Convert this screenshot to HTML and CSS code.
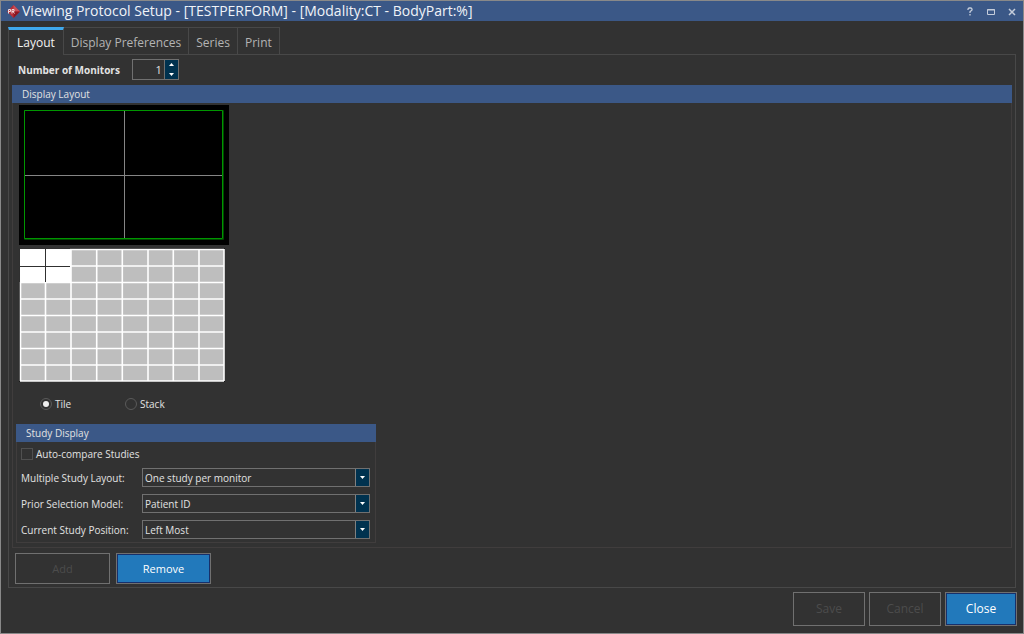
FILE: index.html
```html
<!DOCTYPE html>
<html lang="en">
<head>
<meta charset="utf-8">
<title>Viewing Protocol Setup</title>
<link rel="stylesheet" href="styles.css">
</head>
<body>
<main class="window">
  <header class="titlebar">
    <svg class="logo" width="13" height="13" viewBox="0 0 13 13" aria-hidden="true">
      <path d="M6.5 0 13 6.5 6.5 13 0 6.5Z" fill="#b5303a"/>
      <path d="M6.5 0 13 6.5H6.5Z" fill="#c9505a"/>
      <path d="M6.5 13 13 6.5H6.5Z" fill="#8c1620"/>
      <path d="M1.5 8.500V4.500H3.500V6.500H1.500M5 8.500V4.500H7V6.500H5M6 6.500 7.500 8.500" fill="none" stroke="#f0d8da"/>
    </svg>
    <h1 class="title">Viewing Protocol Setup - [TESTPERFORM] - [Modality:CT - BodyPart:%]</h1>
    <button class="win-btn" type="button" aria-label="Help">
      <svg width="9" height="10" viewBox="0 0 9 10"><path d="M3 4V3L4 2H6L7 3V4L5 5.700V7M5 8V9.500" fill="none" stroke="#c5cddb" stroke-width="1.300"/></svg>
    </button>
    <button class="win-btn" type="button" aria-label="Maximize">
      <svg width="9" height="10" viewBox="0 0 9 10"><path d="M1.500 3.500H8.500V8.500H1.500ZM1 4H9" fill="none" stroke="#c5cddb"/></svg>
    </button>
    <button class="win-btn" type="button" aria-label="Close window">
      <svg width="9" height="10" viewBox="0 0 9 10"><path d="M2 3 8 9M8 3 2 9" fill="none" stroke="#c5cddb" stroke-width="1.500"/></svg>
    </button>
  </header>

  <nav class="tabs" role="tablist">
    <button class="tab tab-active" type="button" role="tab" aria-selected="true">Layout</button>
    <button class="tab" type="button" role="tab">Display Preferences</button>
    <button class="tab" type="button" role="tab">Series</button>
    <button class="tab" type="button" role="tab">Print</button>
  </nav>

  <section class="panel">
    <div class="monitors">
      <label class="monitors-label" for="monitors">Number of Monitors</label>
      <div class="spinner">
        <input class="spinner-input" id="monitors" type="text" inputmode="numeric" value="1">
        <div class="spinner-btns">
          <button class="spin" type="button" aria-label="Increase"><svg width="5" height="3" viewBox="0 0 5 3"><path d="M0 3 2.500 0 5 3Z" fill="#fff"/></svg></button>
          <button class="spin" type="button" aria-label="Decrease"><svg width="5" height="3" viewBox="0 0 5 3"><path d="M0 0H5L2.500 3Z" fill="#fff"/></svg></button>
        </div>
      </div>
    </div>

    <section class="group group-layout">
      <h2 class="group-title">Display Layout</h2>
      <div class="layout-body">
        <svg class="preview" width="210" height="140" viewBox="0 0 210 140" role="img" aria-label="Two by two layout">
          <path d="M0 0H210V140H0Z" fill="#000"/>
          <path d="M105.500 6V134M6 70.500H204" stroke="#858585" fill="none"/>
          <path d="M5.500 5.500H204.500V134.500H5.500Z" stroke="#004800" fill="none"/>
          <path d="M5.500 5.500H203.500V133.500H5.500Z" stroke="#009600" fill="none"/>
        </svg>
        <svg class="picker" width="206" height="134" viewBox="0 0 206 134" role="img" aria-label="Grid size picker">
          <path d="M0 0H206V134H0Z" fill="#181818"/>
          <path d="M1 1H205V133H1Z" fill="#bebebe"/>
          <path d="M1.500 1V133M26.500 1V133M52 1V133M77.700 1V133M103.300 1V133M129 1V133M154.300 1V133M180 1V133M205 1V133M1 1.500H205M1 18H205M1 34.500H205M1 51H205M1 67.500H205M1 84H205M1 100.500H205M1 117H205M1 133H205" stroke="#fff" stroke-width="1.600" fill="none"/>
          <path d="M1 1H52V35H1Z" fill="#fff"/>
          <path d="M0 .5H51M.5 0V34M26.500 1V34M1 18.500H51" stroke="#303030" fill="none"/>
        </svg>
        <div class="modes">
          <label class="mode"><input class="radio" type="radio" name="mode" checked>Tile</label>
          <label class="mode"><input class="radio" type="radio" name="mode">Stack</label>
        </div>
      </div>

      <section class="group group-study">
        <h2 class="group-title">Study Display</h2>
        <div class="study-body">
          <label class="check"><input class="checkbox" type="checkbox">Auto-compare Studies</label>
          <div class="field">
            <label for="multi">Multiple Study Layout:</label>
            <select class="select" id="multi"><option>One study per monitor</option></select>
          </div>
          <div class="field">
            <label for="prior">Prior Selection Model:</label>
            <select class="select" id="prior"><option>Patient ID</option></select>
          </div>
          <div class="field">
            <label for="position">Current Study Position:</label>
            <select class="select" id="position"><option>Left Most</option></select>
          </div>
        </div>
      </section>
    </section>

    <div class="actions">
      <button class="btn" type="button" disabled>Add</button>
      <button class="btn btn-primary" type="button">Remove</button>
    </div>
  </section>

  <footer class="footer">
    <button class="btn btn-footer" type="button" disabled>Save</button>
    <button class="btn btn-footer" type="button" disabled>Cancel</button>
    <button class="btn btn-footer btn-primary" type="button">Close</button>
  </footer>
</main>
</body>
</html>
```
FILE: styles.css
```css
* { box-sizing: border-box; }

body {
  margin: 0;
  background: #323232;
  color: #e2e2e2;
  font: 10px/14px "Open Sans", "Noto Sans", sans-serif;
}

h1, h2 { margin: 0; font: inherit; }

button, input, select { margin: 0; font: inherit; color: inherit; }

svg { display: block; }

.window {
  display: flex;
  flex-direction: column;
  min-height: 100vh;
  border: 1px solid #898989;
}

.titlebar {
  display: flex;
  align-items: center;
  height: 20px;
  padding: 0 2px 0 6px;
  gap: 2px;
  background: #3b5887;
}

.title {
  flex: 1;
  font-size: 14px;
  line-height: 20px;
  color: #f0f3f8;
}

.win-btn {
  display: grid;
  place-items: center;
  width: 19px;
  height: 20px;
  padding: 0;
  border: 0;
  background: none;
}

.tabs {
  display: flex;
  margin: 6px 7px 0;
}

.tab {
  height: 27px;
  padding: 3px 7px 0;
  border: solid #484848;
  border-width: 1px 1px 0 0;
  background: none;
  color: #b4b4b4;
  font-size: 12px;
}

.tab-active {
  position: relative;
  height: 28px;
  margin-bottom: -1px;
  padding: 1px 8px 0;
  border-top: 3px solid #3fa9ee;
  border-left: 1px solid #484848;
  background: #323232;
  color: #f2f2f2;
}

.panel {
  display: flex;
  flex: 1;
  flex-direction: column;
  margin: 0 7px;
  padding: 4px 3px 3px;
  border: 1px solid #484848;
}

.monitors {
  display: flex;
  align-items: center;
  gap: 12px;
  padding-left: 6px;
}

.monitors-label { font-weight: 700; }

.spinner {
  display: flex;
  width: 47px;
  height: 21px;
  border: 1px solid #707070;
}

.spinner-input {
  flex: 1;
  min-width: 0;
  padding: 0 2px;
  border: 0;
  background: none;
  font-size: 11px;
  text-align: right;
}

.spinner-btns {
  display: grid;
  width: 14px;
  border-left: 1px solid #707070;
  background: #00324f;
}

.spin {
  display: grid;
  place-items: center;
  padding: 0;
  border: 0;
  background: none;
}

.group { border: 1px solid #403d3d; border-top: 0; }

.group-title {
  height: 18px;
  margin: 0 -1px;
  padding-left: 10px;
  background: #3b5887;
  line-height: 19px;
}

.group-layout {
  flex: 1;
  margin-top: 5px;
  padding-bottom: 4px;
}

.layout-body { padding: 2px 6px 0; }

.picker { margin-top: 3px; }

.modes {
  display: flex;
  padding: 15px 21px 0;
}

.mode {
  display: flex;
  align-items: center;
  gap: 3px;
  width: 85px;
}

.radio {
  display: grid;
  place-items: center;
  width: 12px;
  height: 12px;
  border: 1px solid #5a5a5a;
  border-radius: 50%;
  appearance: none;
}

.radio:checked::before {
  content: "";
  width: 6px;
  height: 6px;
  border-radius: 50%;
  background: #f0f0f0;
}

.group-study {
  max-width: 360px;
  margin: 13px 3px 0;
}

.study-body {
  display: grid;
  gap: 7px;
  padding: 5px 5px 3px 4px;
}

.check {
  display: flex;
  align-items: center;
  gap: 3px;
}

.checkbox {
  width: 12px;
  height: 12px;
  border: 1px solid #505050;
  appearance: none;
}

.field {
  display: grid;
  grid-template-columns: 121px 1fr;
  align-items: center;
}

.select {
  height: 19px;
  padding: 0 2px;
  border: 1px solid #707070;
  border-radius: 0;
  appearance: none;
  background:
    url("data:image/svg+xml,%3Csvg xmlns='http://www.w3.org/2000/svg' width='14' height='17'%3E%3Cpath d='M0 0H14V17H0Z' fill='%2300324f'/%3E%3Cpath d='M.5 0V17' stroke='%23808080'/%3E%3Cpath d='M5 7H10L7.500 10Z' fill='%23fff'/%3E%3C/svg%3E")
    right center no-repeat;
}

.actions {
  display: flex;
  gap: 6px;
  margin-top: 5px;
  padding-left: 3px;
}

.btn {
  width: 95px;
  height: 31px;
  padding: 0;
  border: 1px solid #707070;
  background: none;
  font-size: 11px;
}

.btn:disabled { color: #4c4c4c; }

.btn-primary {
  background: #2279bb;
  color: #fff;
  box-shadow: inset 0 0 0 1px #17306a;
}

.footer {
  display: flex;
  justify-content: flex-end;
  gap: 4px;
  padding: 4px 6px 7px;
}

.btn-footer {
  width: 72px;
  height: 34px;
  font-size: 12px;
}
```
